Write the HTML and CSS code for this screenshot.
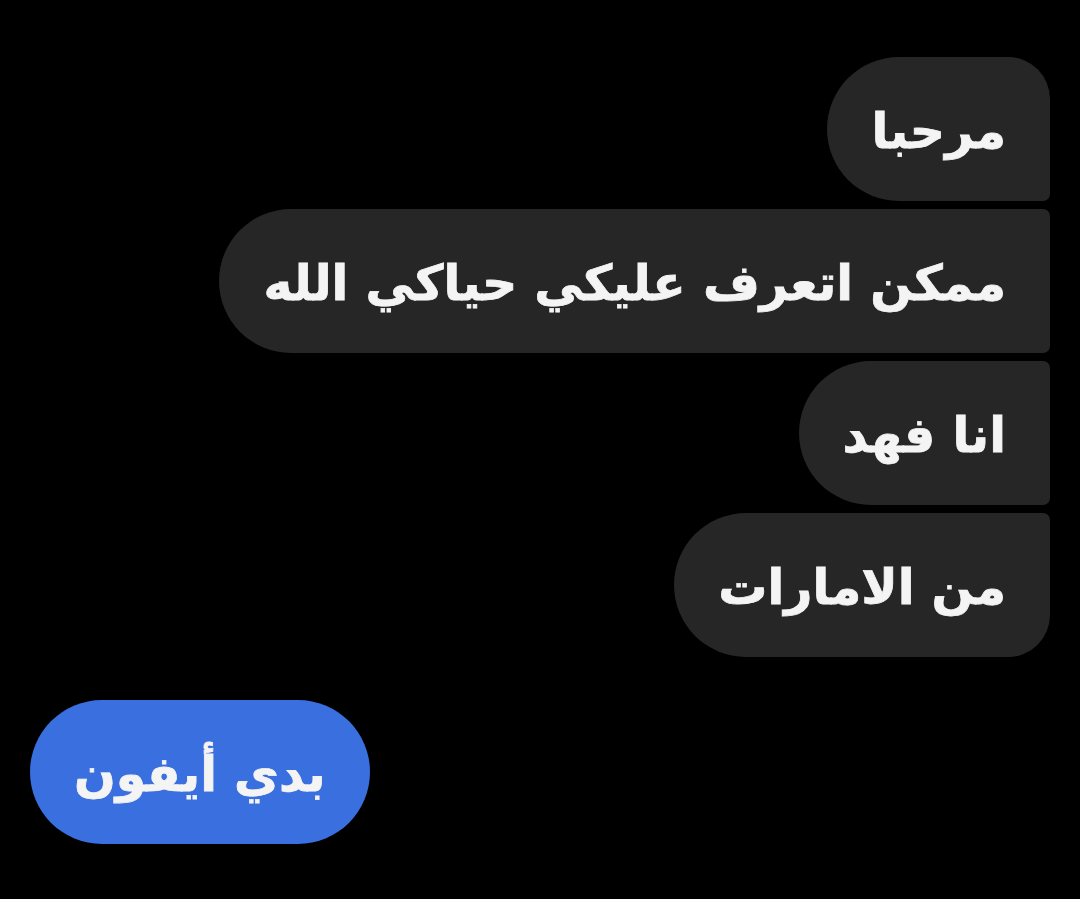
FILE: index.html
```html
<!DOCTYPE html>
<html lang="ar">
<head>
<meta charset="utf-8">
<title>Chat</title>
<link rel="stylesheet" href="styles.css">
</head>
<body>
<main class="chat">
  <section class="group-out">
    <div class="bubble gray first">مرحبا</div>
    <div class="bubble gray">ممكن اتعرف عليكي حياكي الله</div>
    <div class="bubble gray">انا فهد</div>
    <div class="bubble gray last">من الامارات</div>
  </section>
  <section class="group-in">
    <div class="bubble blue">بدي أيفون</div>
  </section>
</main>
</body>
</html>
```
FILE: styles.css
```css
html, body {
  margin: 0;
  padding: 0;
  background: #000;
  height: 100%;
}
.chat {
  display: flex;
  flex-direction: column;
  padding: 57px 30px 0 30px;
  font-family: "DejaVu Sans", "Noto Sans", sans-serif;
  font-weight: bold;
  color: #f4f4f4;
}
.group-out {
  display: flex;
  flex-direction: column;
  align-items: flex-end;
  gap: 8px;
}
.group-in {
  display: flex;
  flex-direction: column;
  align-items: flex-start;
  margin-top: 43px;
}
.bubble {
  direction: rtl;
  box-sizing: border-box;
  height: 144px;
  display: flex;
  align-items: center;
  padding: 4px 44px 0 44px;
  font-size: 49px;
  line-height: 1;
  white-space: nowrap;
  -webkit-text-stroke: 0.8px #f4f4f4;
}
.gray {
  background: #262626;
  border-radius: 72px 7px 7px 72px;
}
.gray.first {
  border-top-right-radius: 42px;
}
.gray.last {
  border-bottom-right-radius: 42px;
}
.blue {
  background: #3a6fe0;
  border-radius: 72px;
  padding: 4px 44px 0 44px;
}
```
